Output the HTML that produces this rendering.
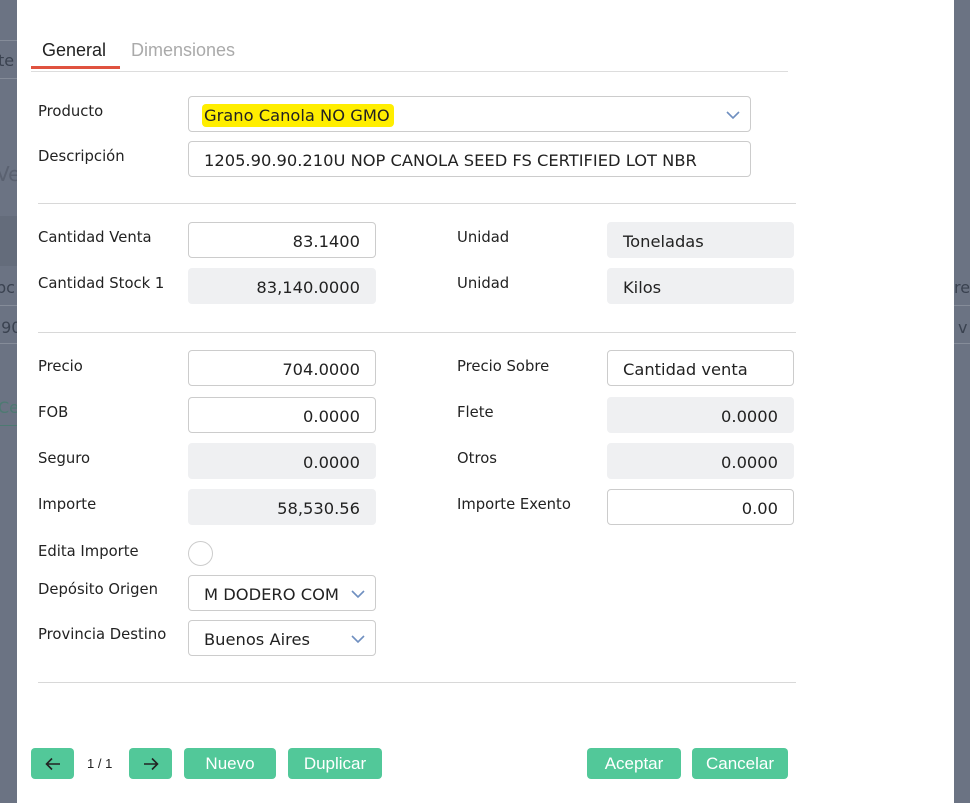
<!DOCTYPE html>
<html><head><meta charset="utf-8"><style>
*{box-sizing:border-box;margin:0;padding:0}
body{width:970px;height:803px;background:#6b7383;font-family:"DejaVu Sans",sans-serif;position:relative;overflow:hidden}
.m{position:absolute;left:17px;top:0px;width:937px;height:803px;background:#fff}
.a{position:absolute}
.l{position:absolute;font-size:14.8px;color:#222;}
.i{position:absolute;height:36px;border:1px solid #ccc;border-radius:4px;font-size:16.3px;color:#222;line-height:37px;padding:0 15px;background:#fff;white-space:nowrap;overflow:hidden}
.r{text-align:right}
.g{background:#eff0f2;border-color:#eff0f2}
.hr{position:absolute;left:38px;width:758px;height:1px;background:#d8d8d8}
.b{position:absolute;top:748px;height:31px;background:#52c899;border-radius:4px;color:#fff;font-size:17px;text-align:center;line-height:31px;font-family:"Liberation Sans Narrow","Liberation Sans",sans-serif}
.chev{position:absolute;right:10px;top:13px}
.bg{position:absolute;color:#3a4250;font-size:16px}
</style></head><body>
<div class="a" style="left:0;top:40px;width:17px;height:1px;background:#858c99"></div>
<div class="bg" style="left:-2px;top:51px">te</div>
<div class="a" style="left:0;top:78px;width:17px;height:1px;background:#858c99"></div>
<div class="bg" style="left:-4px;top:162px;font-size:20px;color:#5a6170">Ve</div>
<div class="a" style="left:0;top:216px;width:17px;height:50px;background:#646c7b"></div>
<div class="bg" style="left:-4px;top:278px">pc</div>
<div class="a" style="left:0;top:305px;width:17px;height:1px;background:#858c99"></div>
<div class="bg" style="left:-4px;top:318px">.90</div>
<div class="a" style="left:0;top:343px;width:17px;height:1px;background:#858c99"></div>
<div class="bg" style="left:-2px;top:398px;color:#4d7a72">Ce</div>
<div class="a" style="left:0;top:425px;width:17px;height:1px;background:#4d7a72"></div>
<div class="bg" style="left:954px;top:278px">re</div>
<div class="a" style="left:954px;top:305px;width:16px;height:1px;background:#858c99"></div>
<div class="bg" style="left:958px;top:318px">v</div>
<div class="a" style="left:954px;top:343px;width:16px;height:1px;background:#858c99"></div>
<div class="m"></div>
<div class="a" style="left:42px;top:40px;font-size:18px;color:#222;font-family:'Liberation Sans',sans-serif">General</div>
<div class="a" style="left:131px;top:40px;font-size:18px;color:#aaa;font-family:'Liberation Sans',sans-serif">Dimensiones</div>
<div class="a" style="left:31px;top:71px;width:757px;height:1px;background:#ddd"></div>
<div class="a" style="left:31px;top:66px;width:89px;height:3px;background:#e0523f"></div>

<div class="l" style="left:38px;top:103px">Producto</div>
<div class="i" style="left:188px;top:96px;width:563px"><span style="background:#ffee00;padding:2px 4px 2px 2px;margin-left:-2px;border-radius:4px">Grano Canola NO GMO</span>
<svg class="chev" width="14" height="10"><path d="M1 2l6 6 6-6" stroke="#6f8fc0" stroke-width="1.6" fill="none"/></svg></div>
<div class="l" style="left:38px;top:148px">Descripción</div>
<div class="i" style="left:188px;top:141px;width:563px">1205.90.90.210U NOP CANOLA SEED FS CERTIFIED LOT NBR</div>
<div class="hr" style="top:203px"></div>

<div class="l" style="left:38px;top:229px">Cantidad Venta</div>
<div class="i r" style="left:188px;top:222px;width:188px">83.1400</div>
<div class="l" style="left:457px;top:229px">Unidad</div>
<div class="i g" style="left:607px;top:222px;width:187px">Toneladas</div>
<div class="l" style="left:38px;top:275px">Cantidad Stock 1</div>
<div class="i r g" style="left:188px;top:268px;width:188px">83,140.0000</div>
<div class="l" style="left:457px;top:275px">Unidad</div>
<div class="i g" style="left:607px;top:268px;width:187px">Kilos</div>
<div class="hr" style="top:332px"></div>

<div class="l" style="left:38px;top:358px">Precio</div>
<div class="i r" style="left:188px;top:350px;width:188px">704.0000</div>
<div class="l" style="left:457px;top:358px">Precio Sobre</div>
<div class="i" style="left:607px;top:350px;width:187px">Cantidad venta</div>
<div class="l" style="left:38px;top:404px">FOB</div>
<div class="i r" style="left:188px;top:397px;width:188px">0.0000</div>
<div class="l" style="left:457px;top:404px">Flete</div>
<div class="i r g" style="left:607px;top:397px;width:187px">0.0000</div>
<div class="l" style="left:38px;top:450px">Seguro</div>
<div class="i r g" style="left:188px;top:443px;width:188px">0.0000</div>
<div class="l" style="left:457px;top:450px">Otros</div>
<div class="i r g" style="left:607px;top:443px;width:187px">0.0000</div>
<div class="l" style="left:38px;top:496px">Importe</div>
<div class="i r g" style="left:188px;top:489px;width:188px">58,530.56</div>
<div class="l" style="left:457px;top:496px">Importe Exento</div>
<div class="i r" style="left:607px;top:489px;width:187px">0.00</div>
<div class="l" style="left:38px;top:543px">Edita Importe</div>
<div class="a" style="left:188px;top:541px;width:25px;height:25px;border:1px solid #ccc;border-radius:50%"></div>
<div class="l" style="left:38px;top:581px">Depósito Origen</div>
<div class="i" style="left:188px;top:575px;width:188px">M DODERO COM<svg class="chev" width="14" height="10"><path d="M1 2l6 6 6-6" stroke="#6f8fc0" stroke-width="1.6" fill="none"/></svg></div>
<div class="l" style="left:38px;top:626px">Provincia Destino</div>
<div class="i" style="left:188px;top:620px;width:188px">Buenos Aires<svg class="chev" width="14" height="10"><path d="M1 2l6 6 6-6" stroke="#6f8fc0" stroke-width="1.6" fill="none"/></svg></div>
<div class="hr" style="top:682px"></div>

<div class="b" style="left:31px;width:43px"><svg width="16" height="14" style="margin-top:9px"><path d="M15 7H2M7 1.5L1.5 7 7 12.5" stroke="#222" stroke-width="1.6" fill="none"/></svg></div>
<div class="a" style="left:87px;top:756px;font-size:13px;color:#222;font-family:'Liberation Sans Narrow','Liberation Sans',sans-serif">1 / 1</div>
<div class="b" style="left:129px;width:43px"><svg width="16" height="14" style="margin-top:9px"><path d="M1 7h13M9 1.5L14.5 7 9 12.5" stroke="#222" stroke-width="1.6" fill="none"/></svg></div>
<div class="b" style="left:184px;width:92px">Nuevo</div>
<div class="b" style="left:288px;width:94px">Duplicar</div>
<div class="b" style="left:587px;width:94px">Aceptar</div>
<div class="b" style="left:692px;width:96px">Cancelar</div>
</body></html>
